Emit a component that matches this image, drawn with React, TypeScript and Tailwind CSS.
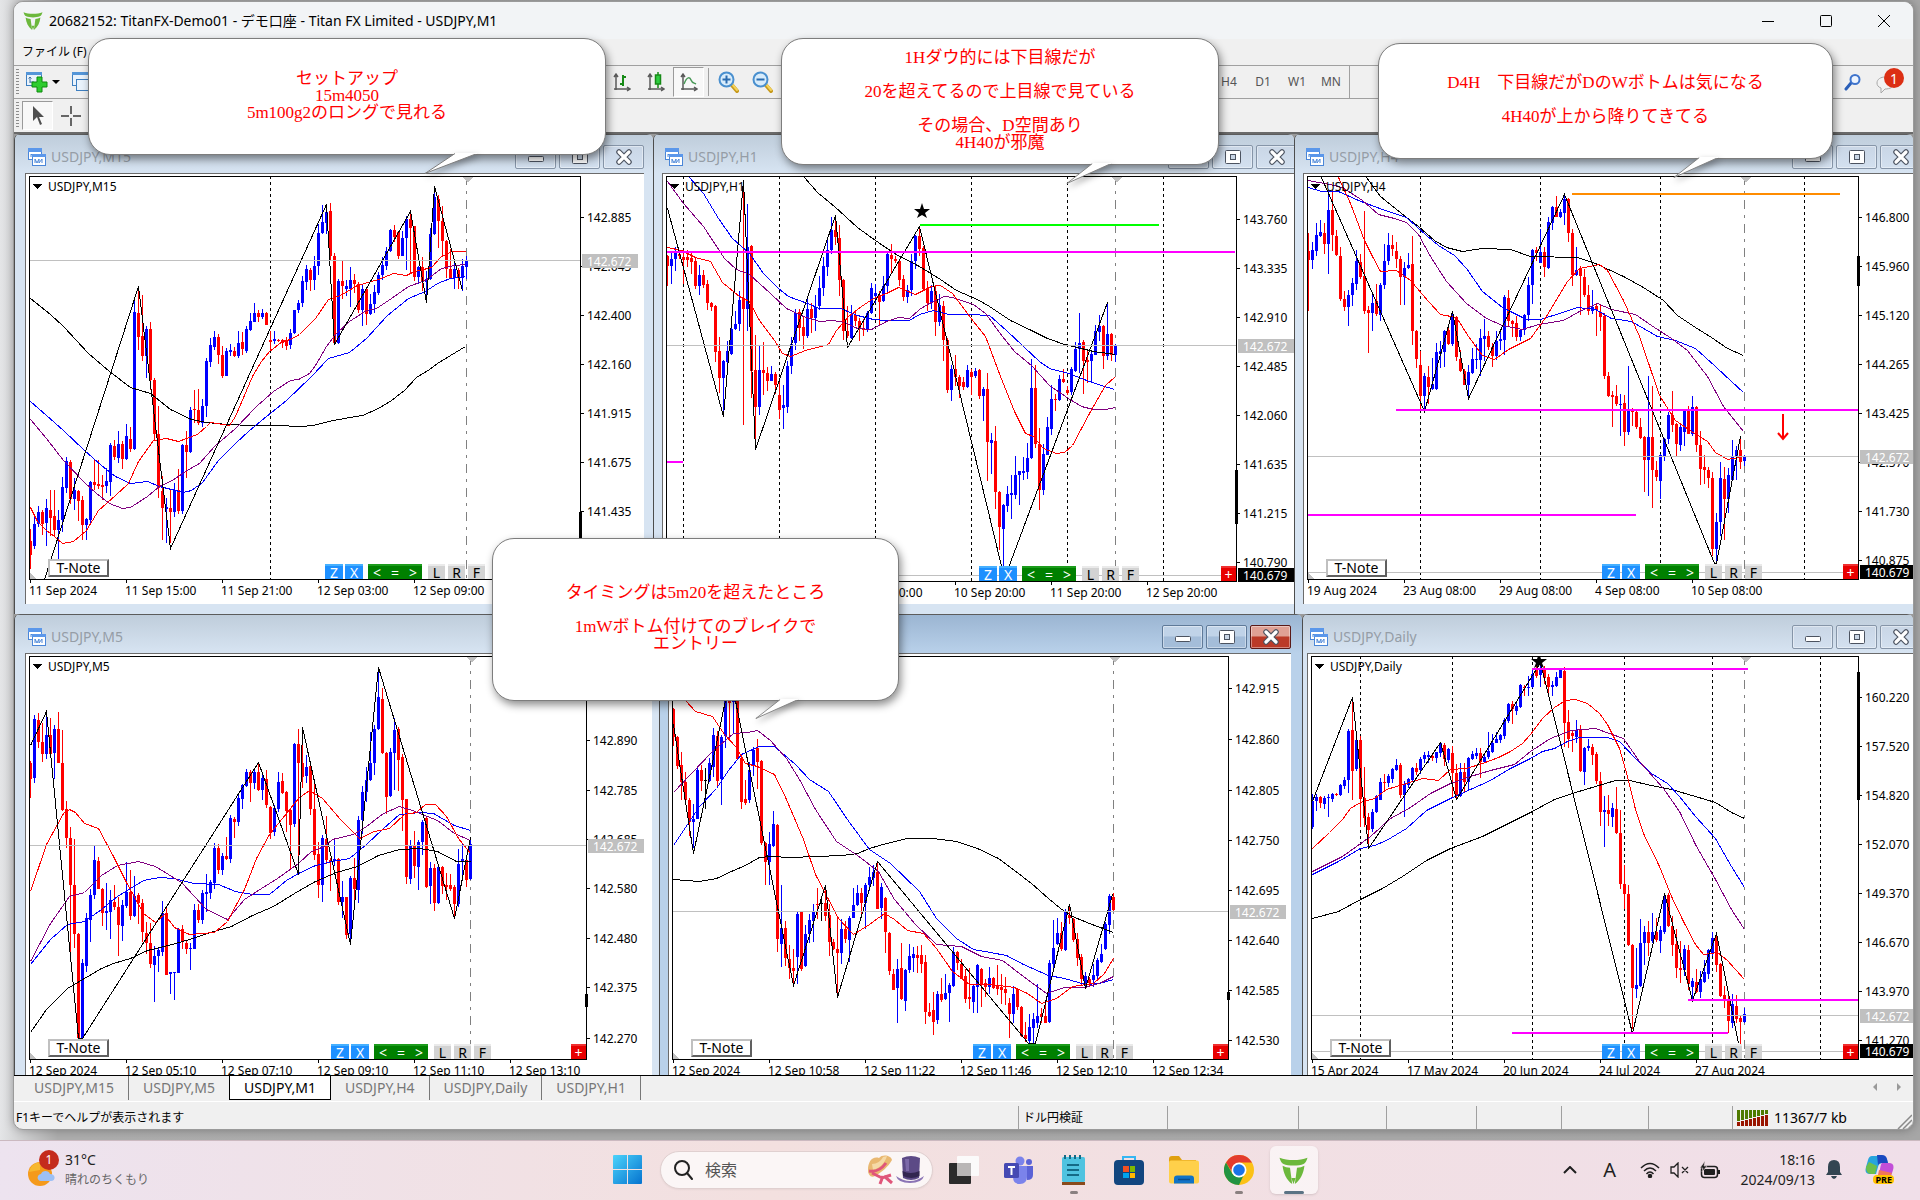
import React from "react";

type Pt = [number, number];

type Chart = {
  id: string;
  title: string;
  unit: number;
  left: number;
  right: number;
  top: number;
  bottom: number;
  start: number;
  candles: string;
  zigzag: string;
  slow: string;
  blue: string;
  purple: string;
  red: string;
  days: number[];
  shift: number;
  bid: number;
  low?: number;
  ticks: [number, string][];
  times: [number, string][];
  range: Pt;
  levels: { y: number; from: number; to: number; color: string }[];
  star?: Pt;
  arrow?: [number, number, number];
  tools: number;
  note?: number;
  plus?: boolean;
};

const M15: Chart = {
  id: "m15",
  title: "USDJPY,M15",
  unit: 2.3758,
  left: 70,
  right: 1380,
  top: 49,
  bottom: 1258,
  start: 72,
  candles: `d1107,1145,1185,1228 u1072,1092,1160,1168 u1040,1058,1092,1102 d1050,1058,1092,1125 u1018,1046,1090,1160
d990,1050,1075,1130 d990,1068,1110,1130 u1052,1080,1110,1197 u952,982,1080,1118 u892,905,985,1000
d900,908,1018,1032 u955,992,1018,1050 d990,993,1025,1085 d1008,1022,1095,1142 u1075,1078,1095,1142
u963,968,1080,1092 d898,968,975,990 d900,972,978,988 d945,975,982,1022 u925,965,980,1000
u850,857,968,1010 d840,860,893,900 u815,852,895,910 d845,852,898,928 u792,830,898,902
d803,838,868,876 u415,458,868,870 d380,460,533,570 d407,528,588,603 u500,507,590,655
d487,507,660,690 d655,660,822,840 d738,822,985,1015 d950,993,1045,1142 u1015,1042,1048,1150
d990,1045,1058,1150 u970,990,1058,1072 d928,990,1055,1062 u852,857,1055,1062 d815,857,878,955
u742,750,878,880 d690,748,752,790 d688,750,790,797 u717,740,790,802 u595,603,740,772
u535,555,607,622 u513,533,562,572 d522,533,585,613 d560,585,648,655 u565,575,648,650
u552,572,577,590 d563,573,590,592 u513,550,588,595 d518,547,568,585 u500,507,573,580
u460,483,512,515 u430,460,487,487 d450,460,473,487 u447,460,473,477 d458,460,497,497
d513,541,546,575 u515,538,545,552 d538,540,543,548 d537,541,550,565 d533,545,558,572
u507,520,557,568 u450,452,520,522 u420,430,452,460 u348,365,430,442 u315,328,367,390
d325,332,360,395 u290,320,360,392 u192,220,320,345 u135,187,220,222 u148,157,190,222
d130,155,290,300 d280,290,550,553 u357,363,550,553 d302,363,380,417 u362,378,387,410
u323,362,387,442 d342,362,372,400 d368,373,452,460 u372,387,452,500 d385,388,463,497
u403,433,463,465 u375,397,433,460 u338,347,400,405 u292,317,347,360 u263,273,318,330
u207,210,273,278 d195,210,232,248 d213,218,288,297 u215,235,288,290 u170,177,235,332
d160,177,205,340 d198,200,353,365 u320,322,353,372 d292,322,365,395 u333,358,368,420
u205,222,358,360 u85,113,222,225 d105,118,185,265 d140,185,245,285 d240,243,327,355
d268,327,355,358 u305,328,355,387 d325,330,355,387 u298,320,355,395 u290,300,323,357`,
  zigzag: "105,1258 329,378 405,1165 775,133 795,552 975,155 1013,427 1033,80 1098,392",
  slow: "72,414 120,462 150,498 210,580 260,635 310,681 357,700 405,748 455,778 490,788 540,794 600,797 660,797 715,799 745,795 780,783 830,772 860,765 900,745 930,722 960,690 990,652 1020,628 1040,610 1070,585 1107,560",
  blue: "72,724 110,765 150,812 200,870 240,915 275,950 310,971 350,965 380,978 435,997 455,990 480,967 520,900 560,850 590,815 620,780 680,722 740,648 780,596 830,578 870,535 920,465 970,415 1010,395 1040,370 1070,355 1107,348",
  purple: "72,778 110,835 150,900 200,968 230,1000 260,1030 290,1045 310,1042 350,1008 380,980 410,962 440,935 475,910 510,858 560,805 610,738 650,695 690,662 710,657 735,640 750,615 775,560 800,520 830,485 870,452 895,445 930,415 970,380 1010,362 1050,325 1080,316 1107,313",
  red: "72,1042 90,1085 110,1110 130,1130 148,1151 175,1143 205,1112 235,1050 275,1005 305,970 330,905 365,840 395,836 425,843 470,822 490,798 500,786 545,795 560,770 600,650 620,605 640,575 670,545 690,538 712,522 750,475 780,418 810,405 850,375 900,358 935,340 965,347 985,335 1005,327 1025,322 1050,288 1075,274 1107,274",
  days: [643],
  shift: 1108,
  bid: 301,
  ticks: [[172, "142.885"], [319, "142.645"], [466, "142.400"], [613, "142.160"], [760, "141.915"], [907, "141.675"], [1054, "141.435"]],
  times: [[72, "11 Sep 2024"], [300, "11 Sep 15:00"], [528, "11 Sep 21:00"], [757, "12 Sep 03:00"], [985, "12 Sep 09:00"]],
  range: [1057, 1200],
  levels: [],
  tools: 773,
  note: 115,
};

const H1: Chart = {
  id: "h1",
  title: "USDJPY,H1",
  unit: 2.4123,
  left: 40,
  right: 1414,
  top: 49,
  bottom: 1265,
  start: 42,
  candles: `d285,290,318,378 u275,297,320,372 u263,280,297,333 d278,282,290,298 d272,292,300,372
d272,293,300,322 d280,295,307,342 d292,305,380,388 u315,345,380,407 d332,345,375,385
d362,372,430,452 d428,430,443,453 d437,440,577,608 d533,575,655,700 u600,605,655,755
u545,573,607,640 u500,508,583,585 u453,492,508,512 u395,420,492,515 d60,415,447,795
u132,262,447,515 d255,260,635,715 d525,632,742,840 u555,632,742,765 d547,630,640,705
d622,640,663,693 u620,642,665,665 d637,643,675,703 d668,705,752,778 u677,735,745,807
u603,618,742,760 u532,552,620,643 u447,460,550,570 d447,458,505,545 d473,503,528,568
u418,447,530,535 d430,447,475,520 u405,443,475,515 u350,385,440,450 u293,320,385,408
u238,270,322,350 u172,210,272,283 d180,212,232,255 d197,235,362,410 d358,362,515,540
d440,513,530,535 u435,463,535,538 d457,467,485,500 d475,483,505,543 d478,505,512,528
u455,460,510,518 u370,385,460,462 u373,400,410,430 d395,405,428,497 u350,380,425,427
u277,282,380,402 d252,287,297,342 d290,297,303,310 d297,305,360,380 d347,357,413,425
u375,390,413,430 u283,303,390,410 u227,230,303,328 d200,230,267,290 d260,265,388,395
d365,388,430,453 u375,395,430,447 d375,395,488,528 u402,435,488,500 d425,438,540,605
d535,540,690,700 u615,627,690,723 d587,627,653,678 d645,653,680,715 d652,667,683,690
u615,630,683,685 d627,637,652,705 u625,635,648,655 d627,632,710,717 u683,687,708,783
d640,687,848,963 u820,842,850,942 d800,843,997,1047 d995,997,1103,1172 u1032,1035,1107,1250
u978,1002,1038,1057 u945,1000,1005,1077 u890,947,1005,1018 u933,935,947,1035 u893,933,940,962
u850,895,937,958 u597,685,895,897 d615,685,853,865 d805,852,990,1050 u852,882,990,1005
u773,803,885,887 u675,717,807,825 d702,717,720,755 u645,657,720,723 d627,657,667,670
d680,690,700,705 u622,627,697,705 u548,567,633,638 u460,550,567,640 d540,548,603,703
d568,602,607,670 u577,582,605,667 u495,515,585,587 u467,498,517,545 d495,498,590,627
u427,522,590,600 d520,522,587,603 u553,557,587,608`,
  zigzag: "42,145 177,770 225,60 255,868 447,165 477,562 650,198 855,1255 1104,428",
  slow: "373,52 405,97 445,140 500,202 545,240 590,280 650,318 700,357 740,390 790,418 820,440 870,480 920,512 960,535 1000,552 1040,565 1070,575 1123,582",
  blue: "95,52 130,100 165,175 200,235 240,280 275,340 310,385 335,408 380,430 410,445 460,445 500,465 540,478 570,482 625,480 650,462 685,450 720,463 770,463 820,465 860,510 900,560 940,605 965,625 1010,640 1060,665 1090,675 1120,688",
  purple: "42,65 80,130 130,200 180,295 210,328 240,342 290,400 330,445 370,468 410,485 440,480 470,487 500,505 535,508 570,485 600,472 625,475 650,448 675,430 710,408 730,413 780,433 810,460 850,530 880,575 920,615 965,675 1010,715 1040,738 1070,748 1100,748 1122,742",
  red: "42,262 75,270 110,293 145,305 175,368 215,408 240,425 265,480 300,540 320,580 340,590 375,570 430,553 450,510 480,470 510,440 540,415 570,400 600,382 640,402 680,380 700,376 730,400 780,485 810,530 845,650 880,755 905,820 925,830 950,865 980,880 1000,877 1020,855 1060,760 1100,675 1122,650",
  days: [81, 312, 544, 776, 1007, 1239],
  shift: 1123,
  bid: 556,
  low: 1246,
  ticks: [[178, "143.760"], [325, "143.335"], [472, "142.910"], [619, "142.485"], [766, "142.060"], [913, "141.635"], [1060, "141.215"], [1207, "140.790"]],
  times: [[505, "9 Sep 20:00"], [737, "10 Sep 20:00"], [968, "11 Sep 20:00"], [1200, "12 Sep 20:00"]],
  range: [930, 1092],
  levels: [
    { y: 275, from: 42, to: 1412, color: "#ff00ff" },
    { y: 903, from: 42, to: 82, color: "#ff00ff" },
    { y: 194, from: 652, to: 1230, color: "#00ff00" },
  ],
  star: [657, 153],
  tools: 796,
  plus: true,
};

const H4: Chart = {
  id: "h4",
  title: "USDJPY,H4",
  unit: 2.4889,
  left: 44,
  right: 1415,
  top: 49,
  bottom: 1258,
  start: 46,
  candles: `d220,275,300,455 u248,272,300,327 u190,225,275,290 u180,217,228,233 d190,220,252,282
u90,150,252,342 d90,150,225,275 d212,230,285,290 d262,290,418,423 d395,417,443,453
u390,405,443,500 u355,370,407,440 u272,305,372,390 d282,307,352,357 d155,350,453,463
d440,450,460,580 u402,430,460,513 d372,423,463,468 u370,377,465,485 u252,303,377,388
u220,255,305,317 d225,255,267,290 d248,275,297,325 d288,297,353,437 u308,325,353,437
u280,315,325,327 d230,313,513,557 d510,513,597,625 d575,617,710,748 u640,650,710,755
d618,652,683,732 u595,672,687,690 u550,578,687,690 u543,573,582,625 u510,513,577,622
d500,510,553,555 u457,472,552,560 d470,473,593,603 d570,597,635,637 d627,633,675,677
u615,637,675,710 u565,597,640,643 u552,597,600,628 u508,535,600,650 u478,530,537,603
d515,530,562,570 d550,562,590,623 u515,543,588,602 u508,537,543,572 u407,413,540,585
d390,415,485,500 d480,485,492,532 d470,490,532,545 u507,512,533,545 u462,467,512,525
u352,375,467,485 u267,272,375,433 d262,270,280,305 u208,278,310,310 d262,277,323,353
u172,188,325,327 u140,142,190,210 d108,142,172,173 u147,158,172,175 u107,118,160,195
d115,118,220,247 d207,220,347,380 u262,330,347,350 d320,328,350,467 d328,352,407,412
d377,407,455,465 u390,443,455,462 d430,440,450,530 d432,458,472,513 d460,470,650,658
d637,650,708,712 d693,705,712,803 d675,708,733,738 u703,733,735,828 d705,730,817,860
u618,752,817,827 d745,750,758,798 d752,758,803,808 d775,803,835,838 d830,833,902,998
u650,833,902,1010 d678,833,930,1045 d905,930,952,963 u883,887,965,1017 u835,838,888,903
u757,765,838,853 d693,765,797,817 d790,792,853,893 u795,803,857,873 u748,750,817,860
d738,752,822,823 u708,743,822,830 d740,742,857,877 d815,855,927,975 d887,923,930,973
d923,930,955,985 d937,955,1167,1190 u1060,1087,1167,1210 u908,955,1087,1130 d923,957,1017,1140
u925,945,1017,1060 u840,890,960,962 u858,870,892,960 d832,870,908,927 u887,890,905,918`,
  zigzag: "78,52 335,755 404,455 444,715 683,103 1056,1210 1062,1210 1121,828",
  slow: "190,52 225,110 290,172 320,200 360,240 390,262 430,273 480,265 550,268 600,288 715,292 760,310 830,350 880,382 930,422 965,465 1010,502 1050,533 1090,565 1128,585",
  blue: "46,82 80,93 120,93 170,120 230,148 290,173 340,225 370,255 410,287 440,325 480,395 530,443 590,477 625,478 670,460 715,441 760,447 800,475 850,485 915,530 960,540 1010,565 1060,620 1100,665 1130,698",
  purple: "46,62 100,73 130,83 180,120 220,163 260,175 290,188 320,222 350,290 390,365 440,430 490,475 530,495 580,508 620,493 680,480 720,455 765,430 800,448 860,462 900,495 950,535 990,570 1040,650 1080,740 1130,813",
  red: "120,52 150,130 185,240 205,290 225,335 265,332 300,360 345,425 375,462 415,473 445,530 480,585 510,598 545,568 600,535 640,470 690,365 720,325 770,312 790,330 830,420 870,530 920,705 960,780 1000,815 1040,845 1060,878 1090,898 1131,890",
  days: [325, 623, 922, 1280],
  shift: 1131,
  bid: 889,
  low: 1238,
  ticks: [[172, "146.800"], [319, "145.960"], [466, "145.120"], [613, "144.265"], [760, "143.425"], [907, "142.570"], [1054, "141.730"], [1201, "140.875"]],
  times: [[46, "19 Aug 2024"], [285, "23 Aug 08:00"], [524, "29 Aug 08:00"], [763, "4 Sep 08:00"], [1003, "10 Sep 08:00"]],
  range: [288, 378],
  levels: [
    { y: 101, from: 703, to: 1371, color: "#ff8c00" },
    { y: 749, from: 265, to: 1415, color: "#ff00ff" },
    { y: 1064, from: 46, to: 864, color: "#ff00ff" },
  ],
  arrow: [1229, 762, 838],
  tools: 779,
  note: 91,
  plus: true,
};

const M5: Chart = {
  id: "m5",
  title: "USDJPY,M5",
  unit: 2.3758,
  left: 70,
  right: 1394,
  top: 170,
  bottom: 1378,
  start: 72,
  candles: `d485,490,540,597 u348,360,537,550 d342,362,428,447 d370,427,465,487 u350,408,465,478
d355,408,465,472 u378,390,462,540 d337,390,490,492 d393,490,632,635 d605,628,717,747
d682,717,858,1070 d720,858,1005,1047 d1000,1005,1317,1320 u1078,1092,1317,1320 u940,957,1100,1117
u870,888,963,1028 u738,783,888,900 d773,785,868,870 d865,868,942,980 u852,935,942,993
u873,903,938,1020 d857,907,922,933 d893,922,978,1070 u903,917,980,1025 u787,878,920,927
d812,877,950,963 u830,890,950,953 d880,888,912,973 d898,910,997,1028 d968,1000,1032,1063
d972,1032,1095,1105 u1040,1070,1098,1208 u1045,1053,1070,1118 u905,942,1057,1070 d920,942,1127,1128
u1117,1119,1125,1185 u1118,1119,1122,1203 u987,988,1120,1122 d978,990,1028,1048 d1022,1030,1048,1065
u1030,1045,1050,1112 u915,933,1048,1050 d915,933,962,970 u873,882,962,975 u825,877,883,938
u843,848,882,900 u732,747,850,870 d735,747,812,823 u762,770,813,827 d712,770,778,782
u648,657,780,790 d653,658,668,717 u582,597,668,680 u553,558,600,628 u510,518,560,562
d513,518,552,608 u510,517,550,570 d490,517,572,575 u523,537,573,602 d513,540,617,625
d620,622,700,720 u618,625,697,710 u518,547,628,637 d520,545,580,583 d575,577,635,697
d630,633,677,808 u430,435,673,682 d390,435,490,815 d435,490,532,567 u467,503,530,552
d487,500,630,647 d555,628,767,783 d728,765,858,895 u707,717,858,908 d650,720,782,795
d777,783,787,875 u715,780,785,800 d777,780,908,917 u845,893,908,957 d893,893,1007,1020
u830,837,1005,1030 d777,837,870,905 u650,663,872,910 u560,577,663,705 u502,543,577,607
u398,490,543,545 u378,388,492,527 u205,293,390,392 d265,300,462,463 d458,462,593,643
u447,457,590,592 u355,392,460,572 d383,388,483,575 d463,473,602,695 d598,600,833,855
u723,738,840,855 d695,737,800,837 u723,727,803,872 u663,668,728,768 d653,657,863,865
u787,807,860,913 d795,807,912,935 u800,803,912,913 d800,803,860,885 d820,857,862,903
d823,857,868,875 d858,862,915,950 u750,795,915,923 u730,780,788,835 d778,783,842,862
u712,735,840,843`,
  zigzag: "72,437 110,335 186,1317 196,1317 614,488 709,823 718,382 832,1033 899,203 1079,955 1117,712",
  slow: "72,1297 110,1230 160,1167 200,1135 240,1105 270,1090 310,1077 350,1052 400,1038 450,1020 500,998 550,980 600,948 650,920 700,882 750,845 800,817 850,800 900,767 950,750 1000,746 1040,755 1085,785 1118,785",
  blue: "72,1095 120,1020 160,973 200,965 240,930 280,890 340,842 380,834 415,835 460,850 520,853 560,875 600,883 640,883 680,843 710,820 750,797 790,785 830,777 870,735 910,685 950,643 1000,637 1030,640 1080,677 1118,692",
  purple: "72,1085 120,970 165,890 200,877 240,828 280,797 330,785 370,800 430,847 490,930 540,958 580,900 620,865 660,835 710,790 740,755 770,740 790,718 840,705 870,680 910,640 950,620 980,632 1040,662 1080,700 1118,722",
  red: "72,875 110,735 150,640 165,628 180,637 200,672 235,687 270,770 300,848 340,940 370,968 390,945 415,983 450,1005 510,998 540,965 580,870 610,775 640,705 680,640 710,595 735,573 765,597 810,660 855,717 890,695 925,687 960,643 990,637 1010,615 1035,613 1060,650 1090,717 1118,760",
  days: [],
  shift: 1118,
  bid: 737,
  ticks: [[421, "142.890"], [571, "142.785"], [718, "142.685"], [867, "142.580"], [1015, "142.480"], [1164, "142.375"], [1317, "142.270"]],
  times: [[72, "12 Sep 2024"], [300, "12 Sep 05:10"], [528, "12 Sep 07:10"], [757, "12 Sep 09:10"], [985, "12 Sep 11:10"], [1213, "12 Sep 13:10"]],
  range: [1183, 1223],
  levels: [],
  tools: 787,
  note: 115,
  plus: true,
};

const M1: Chart = {
  id: "m1",
  title: "USDJPY,M1",
  unit: 2.4123,
  left: 54,
  right: 1396,
  top: 170,
  bottom: 1378,
  start: 56,
  candles: `d325,328,412,440 d410,412,500,510 d457,497,547,602 d517,547,602,618 d595,602,667,710
u615,660,668,745 u503,513,658,660 d497,513,545,575 k505,543,546,630 u475,490,545,547
u385,408,502,533 d395,410,545,560 u407,412,540,617 u290,300,410,447 d280,290,310,420
u280,290,308,400 d290,300,478,480 d465,477,607,628 d543,600,612,617 u487,513,603,612
u443,453,500,530 d420,445,487,570 d483,485,730,738 d728,732,788,857 u697,735,788,857
u635,673,740,743 d673,677,1020,1057 u858,985,1035,1103 d965,985,1077,1100 d1037,1080,1107,1140
d1050,1105,1115,1155 u937,945,1073,1155 d935,937,1110,1115 u977,1005,1100,1103 u943,962,1005,1030
u913,937,965,1027 d867,913,917,960 k900,912,915,965 d857,910,950,965 d915,947,1027,1070
d1020,1027,1050,1053 d955,1050,1060,1190 u960,990,1060,1093 d965,988,1020,1030 u950,957,1022,1088
u867,917,955,957 u857,880,917,920 d867,880,910,957 u852,857,910,990 u803,833,857,875
u797,817,835,860 d785,817,928,930 u850,863,927,960 d893,895,998,1060 d998,1000,1115,1127
d1110,1123,1172,1173 u1080,1110,1167,1272 d1030,1107,1200,1202 u1110,1113,1205,1235 u1035,1070,1113,1120
u1043,1065,1075,1117 d1040,1067,1075,1120 d1037,1067,1093,1120 d1067,1087,1237,1273 d1212,1237,1250,1252
d1178,1233,1267,1307 u1175,1185,1263,1273 d1135,1183,1202,1208 u1123,1180,1200,1202 u1152,1158,1180,1268
u1043,1057,1160,1162 d1055,1057,1090,1113 d1078,1093,1138,1140 d1110,1130,1200,1212 d1107,1193,1200,1230
u1155,1160,1208,1240 u1095,1097,1163,1242 d1107,1110,1155,1222 d1140,1150,1163,1193 u1103,1135,1163,1183
d1133,1137,1167,1170 d1098,1157,1168,1187 d1125,1163,1173,1215 d1133,1170,1180,1217 d1195,1210,1245,1317
u1160,1183,1245,1270 d1167,1170,1223,1233 d1220,1223,1310,1313 d1268,1307,1320,1328 u1243,1282,1325,1330
u1240,1260,1285,1330 u1155,1250,1272,1285 d1225,1243,1253,1270 d1210,1250,1270,1272 u1083,1090,1268,1272
u963,1045,1093,1105 u957,1000,1035,1037 d968,1000,1050,1055 u930,935,1053,1055 d915,947,957,975
d955,960,1022,1027 d1000,1020,1077,1100 d1065,1073,1140,1160 u1117,1130,1160,1167 d1133,1138,1150,1160
u1093,1127,1143,1163 u1075,1083,1130,1142 u1035,1065,1088,1092 u968,973,1050,1052 u885,890,977,1003
d882,893,933,935`,
  zigzag: "56,375 105,760 195,230 346,1158 423,857 452,1192 549,785 913,1330 930,1330 1012,913 1050,1167 1116,885",
  slow: "56,838 120,844 160,837 200,812 230,797 265,773 290,769 340,773 400,770 465,768 500,760 530,747 570,730 620,716 680,715 740,725 790,745 840,777 880,812 920,850 960,895 990,925 1020,950 1060,970 1118,998",
  blue: "56,737 90,675 120,620 160,565 190,512 220,465 265,440 300,440 350,495 385,540 430,575 480,668 530,748 580,790 650,875 690,955 740,1015 780,1048 820,1057 860,1067 900,1095 960,1127 1000,1135 1050,1155 1085,1152 1118,1140",
  purple: "56,578 100,520 150,455 200,400 235,398 260,391 290,422 330,475 360,540 400,630 450,725 500,768 550,815 590,900 640,975 690,1033 750,1040 800,1070 850,1083 900,1130 955,1180 1000,1163 1050,1162 1090,1147 1118,1130",
  red: "85,303 110,335 150,350 180,405 205,440 230,490 260,500 300,525 330,600 370,720 400,825 430,900 455,955 490,1003 530,975 565,942 590,960 620,993 660,1000 690,1045 730,1115 770,1155 820,1155 880,1163 910,1180 945,1210 980,1195 1020,1160 1070,1150 1095,1120 1118,1077",
  days: [],
  shift: 1118,
  bid: 934,
  ticks: [[267, "142.915"], [420, "142.860"], [571, "142.805"], [721, "142.750"], [871, "142.695"], [1021, "142.640"], [1171, "142.585"], [1321, "142.530"]],
  times: [[56, "12 Sep 2024"], [288, "12 Sep 10:58"], [520, "12 Sep 11:22"], [751, "12 Sep 11:46"], [983, "12 Sep 12:10"], [1214, "12 Sep 12:34"]],
  range: [1177, 1203],
  levels: [],
  tools: 779,
  note: 100,
  plus: true,
};

const DAILY: Chart = {
  id: "daily",
  title: "USDJPY,Daily",
  unit: 2.4889,
  left: 54,
  right: 1415,
  top: 170,
  bottom: 1378,
  start: 56,
  candles: `u585,605,683,690 u583,593,605,635 d590,593,612,625 u590,595,613,630 u583,593,597,653
u580,583,600,607 d582,583,588,590 u555,558,588,590 u533,542,560,570 u388,395,542,580
d300,393,515,603 u405,422,510,515 d410,423,600,683 d503,597,655,683 d642,652,692,745
u628,638,690,697 u587,590,638,640 u537,548,603,603 d523,548,552,573 u525,530,552,562
u505,510,540,550 u478,497,513,515 d490,497,587,595 u545,553,587,653 u537,540,557,567
u503,507,543,545 d490,507,517,527 u473,478,512,523 u457,467,480,492 u455,468,472,490
d468,470,475,485 u457,458,475,492 u427,430,462,472 d430,437,480,500 u445,450,483,492
d440,460,520,597 d495,520,590,600 u490,517,590,592 d492,517,548,580 u473,477,548,572
u455,465,480,483 u445,460,470,480 d445,460,487,537 u465,472,487,490 u397,455,473,480
u405,430,458,460 u398,420,430,432 u405,407,423,430 u357,362,410,420 u310,313,365,370
d305,315,330,375 u310,320,335,347 u255,258,323,325 d257,262,265,290 u230,263,267,290
u212,225,262,265 d190,205,230,235 u195,212,228,263 d200,213,235,253 d225,233,262,287
u245,257,262,290 u218,232,260,262 u207,210,235,235 d203,215,372,443 d333,367,420,447
d393,400,410,458 u362,393,412,430 d378,393,515,517 u443,445,517,558 u418,440,447,455
d433,443,468,497 d458,465,545,555 d518,545,638,680 u590,632,638,743 d588,632,645,680
u610,627,652,683 d562,628,702,705 d633,700,853,870 d798,853,885,930 d858,883,1037,1040
d1035,1038,1167,1290 u1045,1157,1170,1197 u960,1030,1160,1162 u980,997,1032,1097 d965,997,1030,1070
u942,998,1025,1030 d957,997,1022,1027 u980,993,1025,1062 u880,890,998,1005 d882,888,980,982
d950,980,1038,1070 d990,1035,1105,1137 d1025,1105,1112,1152 u1038,1048,1112,1130 d1037,1053,1155,1173
u1137,1145,1163,1200 d1110,1147,1177,1180 u1115,1140,1178,1195 u1083,1117,1147,1150 u1050,1052,1125,1140
u997,1015,1063,1070 d1003,1015,1097,1117 d1090,1095,1190,1192 d1160,1188,1200,1225 d1183,1200,1265,1300
u1185,1213,1272,1287 d1188,1220,1260,1272 d1247,1257,1267,1333 u1225,1245,1268,1272`,
  zigzag: "56,605 155,293 195,745 375,427 415,600 623,187 852,1300 933,882 1002,1203 1062,1000 1118,1330",
  slow: "56,955 120,935 180,897 230,867 280,830 340,783 400,747 480,710 540,675 600,637 660,600 710,577 760,560 810,541 845,541 900,557 950,568 1010,590 1060,608 1100,637 1131,655",
  blue: "56,825 120,785 175,745 210,738 240,722 290,685 340,632 400,595 450,570 500,543 550,507 600,477 630,455 660,447 690,425 720,413 790,412 820,425 860,475 900,520 940,550 970,590 1010,650 1060,715 1100,800 1131,862",
  purple: "56,815 130,770 200,710 250,655 300,622 350,580 400,550 450,530 500,512 560,495 600,455 650,415 700,392 760,386 830,417 870,485 930,567 970,635 1010,735 1060,840 1100,930 1131,988",
  red: "56,747 100,697 130,660 150,625 175,607 210,595 240,568 290,552 330,537 370,541 400,510 440,505 480,492 520,472 550,455 580,430 600,403 630,357 660,322 685,302 710,298 740,310 770,340 790,375 820,445 840,530 860,630 880,700 920,800 950,890 980,965 1010,1035 1030,1065 1065,1058 1090,1083 1110,1110 1131,1138",
  days: [175, 404, 603, 832, 1051, 1320],
  shift: 1131,
  bid: 1246,
  low: 1355,
  ticks: [[292, "160.220"], [439, "157.520"], [586, "154.820"], [733, "152.070"], [880, "149.370"], [1027, "146.670"], [1174, "143.970"], [1321, "141.270"]],
  times: [[56, "15 Apr 2024"], [295, "17 May 2024"], [534, "20 Jun 2024"], [773, "24 Jul 2024"], [1012, "27 Aug 2024"]],
  range: [217, 603],
  levels: [
    { y: 207, from: 605, to: 1142, color: "#ff00ff" },
    { y: 1200, from: 993, to: 1415, color: "#ff00ff" },
    { y: 1299, from: 555, to: 1093, color: "#ff00ff" },
  ],
  star: [622, 184],
  tools: 779,
  note: 101,
  plus: true,
};

const CANDLE_COLORS: Record<string, string> = { u: "#0000ff", d: "#ff0000", k: "#000000" };
const FRAME_X = 3;
const FRAME_Y = 2;
const CANDLE_STEP = 4;

function ToolKey({ label, className }: { label: string; className: string }) {
  return (
    <button type="button" className={`flex h-[15px] items-center justify-center border-t-2 text-[14px] leading-none ${className}`}>
      {label}
    </button>
  );
}

function ChartView({ chart }: { chart: Chart }) {
  const px = (v: number) => Math.round((v - chart.left) / chart.unit) + FRAME_X;
  const py = (v: number) => Math.round((v - chart.top) / 3) + FRAME_Y;
  const line = (s: string) =>
    s.split(" ").map((p) => {
      const [a, b] = p.split(",").map(Number);
      return `${px(a) + 0.5},${py(b) + 0.5}`;
    }).join(" ");
  const candles = chart.candles.split(/\s+/).map((c) => ({
    color: CANDLE_COLORS[c[0]],
    v: c.slice(1).split(",").map(Number),
  }));
  const right = px(chart.right);
  const bottom = py(chart.bottom);
  const bidY = py(chart.bid);
  const tag = (y: number, fill: string, text: string) => (
    <g>
      <rect x={right + 2} y={y - 7} width={56} height={14} fill={fill} />
      <text x={right + 7} y={y + 5} fill="#fff">{text}</text>
    </g>
  );
  return (
    <div className="relative h-[430px]">
      <svg className="block h-full w-full font-['Noto_Sans',sans-serif] text-[12px]" role="img" aria-label={`${chart.title} chart`} shapeRendering="crispEdges">
        <clipPath id={`plot-${chart.id}`}>
          <rect x={FRAME_X} y={FRAME_Y} width={right - FRAME_X} height={bottom - FRAME_Y} />
        </clipPath>
        <g clipPath={`url(#plot-${chart.id})`} fill="none">
          {chart.days.map((d) => (
            <line key={d} x1={px(d) + 0.5} x2={px(d) + 0.5} y1={FRAME_Y} y2={bottom} stroke="#000" strokeDasharray="3 3" />
          ))}
          <line x1={px(chart.shift) + 0.5} x2={px(chart.shift) + 0.5} y1={FRAME_Y} y2={bottom} stroke="#808080" strokeDasharray="9 6 3 6" />
          {candles.map(({ color, v }, i) => {
            const x = px(chart.start) + i * CANDLE_STEP;
            return (
              <g key={i} fill={color}>
                <rect x={x} y={py(v[0])} width={1} height={Math.max(1, py(v[3]) - py(v[0]))} />
                <rect x={x - 1} y={py(v[1])} width={3} height={Math.max(1, py(v[2]) - py(v[1]))} />
              </g>
            );
          })}
          <polyline points={line(chart.slow)} stroke="#000" />
          <polyline points={line(chart.blue)} stroke="#0000ff" />
          <polyline points={line(chart.purple)} stroke="#800080" />
          <polyline points={line(chart.red)} stroke="#ff0000" />
          <polyline points={line(chart.zigzag)} stroke="#000" />
          {chart.low && <line x1={FRAME_X} x2={right} y1={py(chart.low) + 0.5} y2={py(chart.low) + 0.5} stroke="#c0c0c0" />}
          <line x1={FRAME_X} x2={right} y1={bidY + 0.5} y2={bidY + 0.5} stroke="#c0c0c0" />
          {chart.levels.map((l) => (
            <rect key={`${l.y}-${l.from}`} x={px(l.from)} y={py(l.y)} width={px(l.to) - px(l.from)} height={2} fill={l.color} />
          ))}
          {chart.star && (
            <polygon
              shapeRendering="auto"
              fill="#000"
              transform={`translate(${px(chart.star[0])} ${py(chart.star[1])})`}
              points="0,-8 2,-2 8,-2 3,2 5,7 0,4 -5,7 -3,2 -8,-2 -2,-2"
            />
          )}
          {chart.arrow && (
            <path
              shapeRendering="auto"
              stroke="#ff0000"
              strokeWidth={2}
              d={`M${px(chart.arrow[0])} ${py(chart.arrow[1])}V${py(chart.arrow[2])}m-5 -6l5 6l5 -6`}
            />
          )}
          <path d={`M${px(chart.shift) - 3} ${FRAME_Y + 1}h10l-5 6z`} fill="#c0c0c0" />
          <path d={`M${FRAME_X + 1} ${bottom}v-6l6 6z`} fill="#c0c0c0" />
        </g>
        <rect x={FRAME_X + 0.5} y={FRAME_Y + 0.5} width={right - FRAME_X} height={bottom - FRAME_Y} fill="none" stroke="#000" />
        <rect x={right - 1} y={py(chart.range[0])} width={3} height={py(chart.range[1]) - py(chart.range[0])} fill="#000" />
        {chart.ticks.map(([y, label]) => (
          <g key={label}>
            <rect x={right + 1} y={py(y)} width={3} height={1} fill="#000" />
            <text x={right + 7} y={py(y) + 5}>{label}</text>
          </g>
        ))}
        {chart.times.map(([x, label]) => (
          <g key={label}>
            <rect x={px(x)} y={bottom} width={1} height={4} fill="#000" />
            <text x={px(x) - 1} y={bottom + 16}>{label}</text>
          </g>
        ))}
        {tag(bidY + 1, "#c0c0c0", "142.672")}
        {chart.low && tag(py(chart.low), "#000", "140.679")}
        <path d={`M${FRAME_X + 4} ${FRAME_Y + 8}h9l-4.500 5z`} />
        <text x={FRAME_X + 19} y={FRAME_Y + 15}>{chart.title}</text>
      </svg>
      {chart.note && (
        <button
          type="button"
          className="absolute h-[18px] w-[61px] border-2 border-t-[#c0c0c0] border-r-[#606060] border-b-[#606060] border-l-[#c0c0c0] bg-white text-[14px] leading-none"
          style={{ left: px(chart.note), top: bottom - 20 }}
        >
          T-Note
        </button>
      )}
      <div className="absolute flex" style={{ left: px(chart.tools), top: bottom - 15 }}>
        <ToolKey label="Z" className="w-[18px] border-[#46b0ff] bg-[#1e90ff] text-white" />
        <ToolKey label="X" className="ml-0.5 w-[18px] border-[#46b0ff] bg-[#1e90ff] text-white" />
        <ToolKey label="<" className="ml-[5px] w-[18px] border-[#1c9c1c] bg-[#008000] text-white" />
        <ToolKey label="=" className="w-[18px] border-[#1c9c1c] bg-[#008000] text-white" />
        <ToolKey label=">" className="w-[18px] border-[#1c9c1c] bg-[#008000] text-white" />
        <ToolKey label="L" className="ml-[6px] w-[17px] border-[#eaeaea] bg-[#d3d3d3] text-black" />
        <ToolKey label="R" className="ml-[3px] w-[17px] border-[#eaeaea] bg-[#d3d3d3] text-black" />
        <ToolKey label="F" className="ml-[3px] w-[17px] border-[#eaeaea] bg-[#d3d3d3] text-black" />
      </div>
      {chart.plus && (
        <div className="absolute" style={{ left: right - 15, top: bottom - 15 }}>
          <ToolKey label="+" className="w-[15px] border-[#f03030] bg-[#e80000] text-white" />
        </div>
      )}
    </div>
  );
}

function ChartIcon() {
  return (
    <svg className="h-[18px] w-[18px] shrink-0" viewBox="0 0 18 18" fill="none">
      <rect x="0.5" y="0.5" width="13" height="11" fill="#fff" stroke="#4a86d8" />
      <rect x="0" y="0" width="14" height="4" fill="#5b97ea" />
      <path d="M3 9V6l2 2 2-2 2 2 2-2" stroke="#4a86d8" />
      <rect x="4.5" y="6.5" width="13" height="11" fill="#fff" stroke="#4a86d8" />
      <rect x="4" y="6" width="14" height="3" fill="#5b97ea" />
      <path d="M7 15v-4l2 4 2-4v4l3-4v4" stroke="#4a86d8" />
    </svg>
  );
}

function CaptionButton({ kind, active }: { kind: "min" | "max" | "close"; active?: boolean }) {
  const closeActive = kind === "close" && active;
  const tone = closeActive
    ? "border-[#5a1a18] bg-linear-to-b from-[#e0a195] from-45% to-[#bb3a28] to-50%"
    : active
      ? "border-[#5f7a99] bg-linear-to-b from-[#c0d3e8] from-45% to-[#a4bdd9] to-50%"
      : "border-[#8695a8] bg-linear-to-b from-[#c9d6e6] to-[#d3e0ef]";
  return (
    <button type="button" aria-label={kind} className={`flex h-6 w-[41px] shrink-0 items-center justify-center rounded-xs border shadow-[inset_0_0_0_1px_rgba(255,255,255,0.4)] ${tone}`}>
      <svg className="h-4 w-[18px]" viewBox="0 0 18 16" fill="#fff" stroke="#4c5360">
        {kind === "min" && <rect x="1.5" y="7.5" width="15" height="5" rx="1" />}
        {kind === "max" && (
          <>
            <rect x="1.5" y="1.5" width="15" height="13" rx="1" />
            <rect x="6.5" y="5.5" width="5" height="5" fill="#c9d6e6" />
          </>
        )}
        {kind === "close" && (
          <>
            <path d="M4 3L14 13M14 3L4 13" strokeWidth="5.5" strokeLinecap="round" />
            <path d="M4 3L14 13M14 3L4 13" stroke="#fff" strokeWidth="3.2" strokeLinecap="round" />
          </>
        )}
      </svg>
    </button>
  );
}

function MdiWindow({ chart, active, pad, end }: { chart: Chart; active?: boolean; pad: string; end: string }) {
  return (
    <section className={`min-w-0 overflow-hidden rounded-t-md border-l border-[#4d4d4d] ${active ? "bg-[#b9d1ea]" : "bg-[#d7e4f2]"}`}>
      <header className={`flex h-[39px] items-center border-t border-[#5c5c5c] ${end} ${pad} ${active ? "bg-linear-to-b from-[#9bb5d2] to-[#b9d1ea]" : "bg-linear-to-b from-[#bfcddb] to-[#d7e4f2]"}`}>
        <div className="flex min-w-0 flex-1 items-center gap-[5px] pt-[6px] pl-[3px]">
          <ChartIcon />
          <h2 className={`text-[14px] leading-5 ${active ? "text-black" : "text-[#959da6]"}`}>{chart.title}</h2>
        </div>
        <div className="flex gap-[3px] pt-[6px]">
          <CaptionButton kind="min" active={active} />
          <CaptionButton kind="max" active={active} />
          <CaptionButton kind="close" active={active} />
        </div>
      </header>
      <div className={`pb-[10px] ${pad} ${end}`}>
        <div className="overflow-hidden border-t border-l border-[#6b6b6b] bg-white">
          <ChartView chart={chart} />
        </div>
      </div>
    </section>
  );
}

function Callout({ text, className, tail, drop }: { text: string; className: string; tail: string; drop: string }) {
  return (
    <div className={`absolute z-10 flex items-center justify-center rounded-[22px] border border-[#7d7d7d] bg-white pb-[3px] shadow-[2px_4px_8px_rgba(0,0,0,0.45)] ${className}`}>
      <p className="whitespace-pre-line text-center font-['Liberation_Serif','Noto_Sans_CJK_JP',serif] text-[17px] leading-[17px] font-normal text-[#ff0000]">{text}</p>
      <svg className={`absolute top-full -mt-px drop-shadow-[2px_3px_3px_rgba(0,0,0,0.35)] ${tail} ${drop}`} viewBox="0 0 54 21" preserveAspectRatio="none">
        <path d="M31 0.5L1 20.5L53 0.5" fill="#fff" stroke="#7d7d7d" />
        <path d="M31 0H53" stroke="#fff" strokeWidth="2" />
      </svg>
    </div>
  );
}

function TitanLogo({ className }: { className: string }) {
  return (
    <svg className={className} viewBox="0 0 32 32">
      <path d="M0 2C9 5.500 23 5.500 32 2C31 5 30 8 27.500 9C22 11.500 10 11.500 4.500 9C2 8 1 5 0 2Z" fill="#6cb83c" />
      <path d="M3.500 11C6 12.500 9 13 12 13.300L14.500 32C8 27 4.500 20 3.500 11Z" fill="#6cb83c" />
      <path d="M28.500 11C26 12.500 23 13 20 13.300L17.500 32C24 27 27.500 20 28.500 11Z" fill="#6cb83c" />
      <path d="M13.500 25h5L16 32z" fill="#6cb83c" />
    </svg>
  );
}

function AxisIcon({ kind }: { kind: "bar" | "candle" | "line" }) {
  return (
    <svg className="h-5 w-[18px]" viewBox="0 0 18 20" fill="none" stroke="#5a5a5a" strokeWidth="1.5">
      <path d="M3 18V3M1 5l2-3 2 3M1 17h15M14 15l3 2-3 2" />
      {kind === "bar" && <path d="M10 3v11M10 5h3M7 12h3" stroke="#178a17" strokeWidth="2" />}
      {kind === "candle" && (
        <>
          <path d="M11 0v16" stroke="#178a17" />
          <rect x="8.5" y="3" width="5" height="9" fill="#2ecc40" stroke="#178a17" />
        </>
      )}
      {kind === "line" && <path d="M4 12C7 4 10 5 11 8s3 3 5 4" stroke="#4d9a5b" />}
    </svg>
  );
}

function ZoomIcon({ plus }: { plus?: boolean }) {
  return (
    <svg className="h-[22px] w-[22px]" viewBox="0 0 22 22" fill="none">
      <path d="M13 13l6 7" stroke="#c79a1c" strokeWidth="4" strokeLinecap="round" />
      <path d="M14 13l5 6" stroke="#f5d35a" strokeWidth="2" strokeLinecap="round" />
      <circle cx="8.5" cy="8.5" r="7" fill="#d8ecfb" stroke="#4a90cf" strokeWidth="2" />
      <path d={plus ? "M4.500 8.500h8M8.500 4.500v8" : "M4.500 8.500h8"} stroke="#2b6cb0" strokeWidth="2" />
    </svg>
  );
}

function Grip() {
  return <span className="h-[27px] w-[3px] shrink-0 bg-[repeating-linear-gradient(to_bottom,#8c8c8c_0,#8c8c8c_1px,#f0f0f0_1px,#f0f0f0_3px)]" />;
}

const TIMEFRAMES = ["H4", "D1", "W1", "MN"];
const TABS = ["USDJPY,M15", "USDJPY,M5", "USDJPY,M1", "USDJPY,H4", "USDJPY,Daily", "USDJPY,H1"];

function Toolbars() {
  return (
    <>
      <div className="flex h-[34px] items-center border-t border-b border-[#a0a0a0] pl-[2px]">
        <Grip />
        <button type="button" aria-label="New chart" className="ml-[7px]">
          <svg className="h-[22px] w-[22px]" viewBox="0 0 22 22">
            <rect x="0.5" y="1.5" width="15" height="13" fill="#eaf3fc" stroke="#3f7fc0" />
            <rect x="0" y="1" width="16" height="3" fill="#5596d8" />
            <path d="M4 6v6M2.500 7.500L4 6l1.500 1.500M4 11h4" stroke="#3f6f9f" fill="none" />
            <path d="M11 6h5v5h5v5h-5v5h-5v-5H6v-5h5z" fill="#2ecc2e" stroke="#0d8a0d" />
          </svg>
        </button>
        <svg className="ml-[4px] h-1 w-2" viewBox="0 0 8 4"><path d="M0 0h8L4 4z" /></svg>
        <button type="button" aria-label="Profiles" className="ml-3">
          <svg className="h-[22px] w-[22px]" viewBox="0 0 22 22">
            <rect x="0.5" y="1.5" width="16" height="13" fill="#eaf3fc" stroke="#3f7fc0" />
            <rect x="0" y="1" width="17" height="3" fill="#5596d8" />
            <rect x="4.5" y="8.5" width="16" height="11" fill="#eaf3fc" stroke="#3f7fc0" />
          </svg>
        </button>
        <span className="ml-[519px] flex items-center gap-4">
          <button type="button" aria-label="Bar chart"><AxisIcon kind="bar" /></button>
          <button type="button" aria-label="Candlesticks"><AxisIcon kind="candle" /></button>
        </span>
        <button type="button" aria-label="Line chart" className="ml-2 flex h-[30px] w-[31px] items-center justify-center border border-t-[#9a9a9a] border-r-white border-b-white border-l-[#9a9a9a] bg-[#f8f8f8]">
          <AxisIcon kind="line" />
        </button>
        <span className="ml-1 h-7 w-px bg-[#a0a0a0]" />
        <span className="ml-[9px] flex gap-3">
          <button type="button" aria-label="Zoom in"><ZoomIcon plus /></button>
          <button type="button" aria-label="Zoom out"><ZoomIcon /></button>
        </span>
        <div className="ml-[438px] flex h-full w-[138px] items-center border-r border-[#a0a0a0]">
          {TIMEFRAMES.map((t) => (
            <button key={t} type="button" className="w-[34px] text-center text-[12px] text-[#555]">{t}</button>
          ))}
        </div>
        <div className="ml-auto flex items-center gap-[14px] pr-[7px]">
          <button type="button" aria-label="Search">
            <svg className="h-[18px] w-[18px]" viewBox="0 0 18 18" fill="none">
              <path d="M7 10l-5 6" stroke="#2b5fb8" strokeWidth="3" strokeLinecap="round" />
              <circle cx="11" cy="6.5" r="4.5" fill="#eef5ff" stroke="#3f74cc" strokeWidth="2" />
            </svg>
          </button>
          <button type="button" aria-label="Messages" className="relative h-7 w-[30px]">
            <svg className="absolute top-2 left-0 h-[18px] w-5" viewBox="0 0 20 18">
              <path d="M9 1c5 0 9 2 9 6s-4 6-9 6l-4 4v-5C2 11 1 9 1 7c0-4 4-6 8-6z" fill="#f3f3f3" stroke="#a8a8a8" />
            </svg>
            <span className="absolute top-0 right-0.5 flex h-5 w-5 items-center justify-center rounded-full bg-[#dc2f14] text-[14px] text-white">1</span>
          </button>
        </div>
      </div>
      <div className="flex h-[33px] items-center pl-[2px]">
        <Grip />
        <button type="button" aria-label="Cursor" className="ml-[3px] flex h-[29px] w-[31px] items-center justify-center border border-t-[#9a9a9a] border-r-white border-b-white border-l-[#9a9a9a] bg-[#f8f8f8]">
          <svg className="h-5 w-3" viewBox="0 0 12 20"><path d="M1 0v15l4-4 3 8 2-1-3-7h5z" fill="#4f4f4f" /></svg>
        </button>
        <button type="button" aria-label="Crosshair" className="ml-2">
          <svg className="h-5 w-5" viewBox="0 0 20 20" stroke="#666" strokeWidth="2"><path d="M10 0v8M10 12v8M0 10h8M12 10h8" /></svg>
        </button>
      </div>
    </>
  );
}

function StatusBar() {
  return (
    <footer className="flex h-7 items-stretch border-t border-white pt-1 text-[12px]">
      <span className="flex flex-1 items-center pl-0.5">F1キーでヘルプが表示されます</span>
      <span className="flex w-[149px] items-center border-l border-[#a0a0a0] pl-1">ドル円検証</span>
      <span className="w-[131px] border-l border-[#a0a0a0]" />
      <span className="w-[88px] border-l border-[#a0a0a0]" />
      <span className="w-[90px] border-l border-[#a0a0a0]" />
      <span className="w-[85px] border-l border-[#a0a0a0]" />
      <span className="w-[87px] border-l border-[#a0a0a0]" />
      <span className="w-[84px] border-l border-[#a0a0a0]" />
      <span className="flex w-[181px] items-center gap-[5px] border-l border-[#a0a0a0] pl-1">
        <svg className="h-4 w-8" viewBox="0 0 32 16">
          {[0, 1, 2, 3, 4, 5, 6, 7].map((i) => (
            <g key={i}>
              <rect x={i * 4} y="0" width="3" height={11 - i} fill="#4f7a00" />
              <rect x={i * 4} y={12 - i} width="3" height={4 + i} fill="#9a1500" />
            </g>
          ))}
        </svg>
        <span className="text-[14px]">11367/7 kb</span>
        <svg className="mr-px ml-auto h-4 w-4 self-end" viewBox="0 0 16 16" stroke="#8a8a8a" strokeWidth="1.5"><path d="M2 16L16 2M7 16l9-9M12 16l4-4" /></svg>
      </span>
    </footer>
  );
}

function TaskItem({ label, running, active, children }: { label: string; running?: boolean; active?: boolean; children: React.ReactNode }) {
  return (
    <button type="button" aria-label={label} className="flex w-[55px] items-center justify-center">
      <span className={`relative flex h-12 w-12 items-center justify-center rounded-md ${active ? "bg-white/60 shadow-sm" : ""}`}>
        {children}
        {running && <span className={`absolute bottom-0 h-[3px] rounded-full ${active ? "w-5 bg-[#5b7384]" : "w-2 bg-[#8a8080]"}`} />}
      </span>
    </button>
  );
}

function Taskbar() {
  return (
    <div className="flex h-[60px] items-center border-t border-[#cbb9c0] bg-linear-to-r from-[#ede3ef] via-[#f3e0df] via-40% to-[#f0dfe9] pb-0.5">
      <button type="button" className="flex w-[613px] items-center gap-[6px] pl-[27px] text-left">
        <span className="relative h-10 w-8">
          <svg className="h-10 w-8" viewBox="0 0 32 40">
            <ellipse cx="13" cy="24" rx="12" ry="12" fill="#f59a1b" />
            <path d="M2 22a12 12 0 0 1 11-10v8z" fill="#f7b82e" />
            <path d="M14 31c-4 0-5-6 0-7 1-4 8-4 9 0 6 0 6 7 1 7z" fill="#9dc0f5" />
          </svg>
          <span className="absolute top-0 right-0 flex h-5 w-5 items-center justify-center rounded-full bg-[#c42b1c] text-[12px] text-white">1</span>
        </span>
        <span className="flex flex-col">
          <span className="text-[14px] leading-5 text-[#222]">31°C</span>
          <span className="text-[12px] leading-5 text-[#666]">晴れのちくもり</span>
        </span>
      </button>
      <button type="button" aria-label="Start" className="mr-[18px] shrink-0">
        <svg className="h-[29px] w-[29px]" viewBox="0 0 29 29">
          <defs>
            <linearGradient id="win" x1="0" y1="0" x2="1" y2="1"><stop offset="0" stopColor="#4cd3fb" /><stop offset="1" stopColor="#0573cf" /></linearGradient>
          </defs>
          <path d="M0 1q0-1 1-1h13v14H0zM15 0h13q1 0 1 1v13H15zM0 15h14v14H1q-1 0-1-1zM15 15h14v13q0 1-1 1H15z" fill="url(#win)" />
        </svg>
      </button>
      <label className="flex h-[38px] w-[273px] shrink-0 items-center rounded-full border border-[#e0d0d0] bg-[#fbf6f6] pr-[6px] pl-3 shadow-xs">
        <svg className="h-5 w-5 shrink-0" viewBox="0 0 20 20" fill="none" stroke="#222" strokeWidth="2"><circle cx="9" cy="8" r="7" /><path d="M14 13l5 6" strokeLinecap="round" /></svg>
        <input type="text" aria-label="検索" placeholder="検索" className="ml-3 w-0 flex-1 bg-transparent text-[16px] outline-none placeholder:text-[#555]" />
        <svg className="h-8 w-[60px]" viewBox="0 0 60 32">
          <path d="M2 16C2 8 6 2 13 4c3-4 12-3 13 2-4 7-10 12-17 16-4 2-7-1-7-6z" fill="#e9b871" />
          <path d="M6 10c5 0 9-3 11-7l4-1c-2 7-7 12-14 14z" fill="#f5d9a6" />
          <path d="M3 17c6 1 12-1 17-8M6 19l10 5 9-3M17 22l-3 8M18 22l8 7" stroke="#e0557a" strokeWidth="3" fill="none" />
          <path d="M30 22q14 10 28 0-2 7-14 7t-14-7z" fill="#8b74b5" />
          <path d="M36 4q9-4 18 0l-1 20q-8 4-16 0z" fill="#5c4a86" />
          <path d="M36.500 17q8 4 17 0v5q-8 4-16.500 0z" fill="#322650" />
          <path d="M39 5h4v12h-3z" fill="#7c69a8" />
        </svg>
      </label>
      <div className="ml-[3px] flex">
        <TaskItem label="Task view">
          <svg className="h-[28px] w-[30px]" viewBox="0 0 30 28"><rect x="8" y="0" width="22" height="20" rx="1" fill="#fbfafa" /><rect x="0" y="7" width="22" height="21" rx="1" fill="#2b2b2b" /><rect x="8" y="7" width="14" height="13" fill="#b9b6b6" /></svg>
        </TaskItem>
        <TaskItem label="Teams">
          <svg className="h-[28px] w-[30px]" viewBox="0 0 30 28">
            <circle cx="25" cy="6" r="3" fill="#5b62d6" /><circle cx="16" cy="5" r="4.5" fill="#7b83eb" />
            <path d="M20 10h9v9q0 5-6 5z" fill="#5b62d6" /><path d="M9 10h14v10q0 8-7 8t-7-7z" fill="#7b83eb" />
            <rect x="0" y="7" width="15" height="15" rx="1.5" fill="#4549b3" /><path d="M4 11h7M7.500 11v8" stroke="#fff" strokeWidth="2" />
          </svg>
        </TaskItem>
        <TaskItem label="Notepad" running>
          <svg className="h-[30px] w-[23px]" viewBox="0 0 23 30">
            <rect x="0" y="2" width="23" height="25" rx="1.5" fill="#4fc3e0" /><rect x="0" y="27" width="23" height="3" fill="#8a4a1c" />
            <path d="M3 0v4M8 0v4M13 0v4M18 0v4M5 10h12M5 15h12M5 20h12" stroke="#146a86" strokeWidth="2" />
          </svg>
        </TaskItem>
        <TaskItem label="Store">
          <svg className="h-[30px] w-[30px]" viewBox="0 0 30 30">
            <path d="M9 7V2h12v5" fill="none" stroke="#35b6f2" strokeWidth="2" /><rect x="0" y="5" width="30" height="25" rx="4" fill="#12467f" />
            <path d="M9 11h6v6H9z" fill="#f25022" /><path d="M16 11h5v6h-5z" fill="#7fba00" /><path d="M9 18h6v5H9z" fill="#00a4ef" /><path d="M16 18h5v5h-5z" fill="#ffb900" />
          </svg>
        </TaskItem>
        <TaskItem label="Explorer">
          <svg className="h-[28px] w-[30px]" viewBox="0 0 30 28">
            <path d="M0 3q0-3 3-3h7l3 4h14v8H0z" fill="#e0a010" /><rect x="0" y="4.5" width="30" height="23" rx="2" fill="#ffd04a" />
            <path d="M5 27.500v-5q0-3 3-3h14q3 0 3 3v5z" fill="#1173c6" /><path d="M9 23.500h12" stroke="#0a4d8c" strokeWidth="1.5" />
          </svg>
        </TaskItem>
        <TaskItem label="Chrome" running>
          <svg className="h-[30px] w-[30px]" viewBox="0 0 30 30">
            <circle cx="15" cy="15" r="15" fill="#fbc116" />
            <path d="M2 7.500A15 15 0 0 1 28 7.500H15L9 18.500z" fill="#e33b2e" />
            <path d="M2 7.500L8.500 19Q12 23 20 19.500L15 30A15 15 0 0 1 2 7.500z" fill="#229342" />
            <circle cx="15" cy="15" r="7.5" fill="#fff" /><circle cx="15" cy="15" r="5.8" fill="#1a73e8" />
          </svg>
        </TaskItem>
        <TaskItem label="Titan FX" running active><TitanLogo className="h-7 w-[29px]" /></TaskItem>
      </div>
      <div className="ml-auto flex items-center pr-[26px] text-[#1f1f1f]">
        <svg className="h-2 w-[14px]" viewBox="0 0 14 8" fill="none" stroke="currentColor" strokeWidth="2"><path d="M1 7l6-6 6 6" /></svg>
        <span className="ml-[26px] w-[14px] text-center text-[20px] leading-6">A</span>
        <svg className="ml-[23px] h-4 w-5" viewBox="0 0 20 16" fill="none" stroke="currentColor" strokeWidth="1.5">
          <path d="M1 6q9-9 18 0M4 9q6-6 12 0M6.500 12q3.500-4 7 0" /><circle cx="10" cy="14" r="1.5" fill="currentColor" />
        </svg>
        <svg className="ml-[10px] h-4 w-5" viewBox="0 0 20 16" fill="none" stroke="currentColor" strokeWidth="1.3"><path d="M1 5h3l4-4v14l-4-4H1zM12 5l6 6M18 5l-6 6" /></svg>
        <svg className="ml-[10px] h-[18px] w-[21px]" viewBox="0 0 21 18"><rect x="1.5" y="5.5" width="16" height="11" rx="3" fill="none" stroke="currentColor" strokeWidth="1.5" /><rect x="4" y="8" width="11" height="6" rx="1" fill="currentColor" /><path d="M18 9h2v4h-2z" fill="currentColor" /><path d="M5 0L0 7h3l-1 4 5-6H4z" fill="currentColor" stroke="#f3e0e4" strokeWidth="0.5" /></svg>
        <span className="ml-[20px] flex flex-col text-right text-[14px] leading-5"><span>18:16</span><span>2024/09/13</span></span>
        <svg className="ml-[11px] h-[19px] w-4" viewBox="0 0 16 19" fill="#334552"><path d="M8 0q6 0 6 7v5l2 3H0l2-3V7q0-7 6-7zM5 16h6q-1 3-3 3t-3-3z" /></svg>
        <span className="relative ml-[23px] h-[29px] w-[29px]">
          <svg className="h-[26px] w-[29px]" viewBox="0 0 29 26">
            <path d="M7 1h10q4 0 5 4l1 3h-6q-3 0-4 4l-2 7H5q-6 0-4-7l2-7q1-4 4-4z" fill="#27a5dc" />
            <path d="M1 12q0 7 5 7h4l2-8-8-4z" fill="#6cbf4b" /><path d="M12 0h5q4 0 5 4l1 4h-6q-3 0-4 2z" fill="#1a49c0" />
            <path d="M17 8h7q6 0 4 7l-2 6q-1 4-5 4h-8l2-11q1-6 2-6z" fill="#c24fd8" /><path d="M14 15l13 3-2 4q-1 3-5 3h-8z" fill="#f0775a" />
          </svg>
          <span className="absolute right-0 bottom-0 rounded-sm bg-[#ffc400] px-[2px] text-[9px] leading-[9px] font-bold text-black">PRE</span>
        </span>
      </div>
    </div>
  );
}

export default function App() {
  return (
    <div className="relative flex min-h-screen flex-col overflow-hidden bg-[#b0b0b0] font-['Noto_Sans','Noto_Sans_CJK_JP',sans-serif] text-black">
      <div className="flex-1 bg-linear-to-r from-[#e4e5e7] via-[#adadad] via-3% to-[#a6a6a6] pt-px pr-[6px] pb-[10px] pl-[13px]">
        <main className="overflow-hidden rounded-[10px] border border-[#9a9a9a] bg-[#f0f0f0] shadow-[0_0_10px_rgba(0,0,0,0.3)]">
          <header className="flex h-[37px] items-center bg-[#f2f4f6] pl-[9px]">
            <TitanLogo className="h-[19px] w-5" />
            <h1 className="ml-[6px] text-[14px]">20682152: TitanFX-Demo01 - デモ口座 - Titan FX Limited - USDJPY,M1</h1>
            <div className="ml-auto flex">
              <button type="button" aria-label="Minimize" className="flex w-[58px] justify-center"><svg className="h-3 w-3" viewBox="0 0 12 12"><path d="M0 6.500h12" stroke="#000" /></svg></button>
              <button type="button" aria-label="Maximize" className="flex w-[58px] justify-center"><svg className="h-3 w-3" viewBox="0 0 12 12"><rect x="0.5" y="0.5" width="11" height="11" rx="1" fill="none" stroke="#000" /></svg></button>
              <button type="button" aria-label="Close" className="flex w-[58px] justify-center"><svg className="h-3 w-3" viewBox="0 0 12 12"><path d="M0 0l12 12M12 0L0 12" stroke="#000" /></svg></button>
            </div>
          </header>
          <nav className="flex h-[26px] items-center pl-2 text-[12px]">
            <button type="button">ファイル (F)</button>
          </nav>
          <Toolbars />
          <div className="border-t-2 border-[#6a6a6a] bg-[#9a9a9a]">
            <div className="grid grid-cols-[639fr_641fr_619fr]">
              <MdiWindow chart={M15} pad="pl-[10px]" end="pr-[9px]" />
              <MdiWindow chart={H1} pad="pl-2" end="-mr-[3px]" />
              <MdiWindow chart={H4} pad="pl-2" end="-mr-2" />
            </div>
            <div className="grid h-[461px] grid-cols-[645fr_643fr_611fr] overflow-hidden">
              <MdiWindow chart={M5} pad="pl-[10px]" end="pr-[7px]" />
              <MdiWindow chart={M1} active pad="pl-2" end="pr-[11px]" />
              <MdiWindow chart={DAILY} pad="pl-1" end="-mr-2" />
            </div>
          </div>
          <div className="flex h-[26px] items-start border-t border-black pl-[6px] text-[14px] leading-5 text-[#777]">
            {TABS.map((tab) => (
              <button
                key={tab}
                type="button"
                className={
                  tab === "USDJPY,M1"
                    ? "h-6 border border-t-0 border-black bg-white px-[14px] text-black"
                    : tab === "USDJPY,M5"
                      ? "h-6 px-[14px]"
                      : "h-6 border-r border-[#777] px-[14px]"
                }
              >
                {tab}
              </button>
            ))}
            <span className="mt-[7px] ml-auto flex gap-[20px] pr-3">
              <svg className="h-2 w-1" viewBox="0 0 4 8"><path d="M4 0v8L0 4z" fill="#999" /></svg>
              <svg className="h-2 w-1" viewBox="0 0 4 8"><path d="M0 0v8l4-4z" fill="#999" /></svg>
            </span>
          </div>
          <StatusBar />
        </main>
      </div>
      <Taskbar />

      <Callout text={"セットアップ\n15m4050\n5m100g2のロングで見れる"} className="top-[38px] left-[88px] h-[117px] w-[518px]" tail="left-[335px]" drop="h-[21px] w-[54px]" />
      <Callout text={"1Hダウ的には下目線だが\n\n20を超えてるので上目線で見ている\n\nその場合、D空間あり\n4H40が邪魔"} className="top-[38px] left-[781px] h-[127px] w-[438px]" tail="left-[284px]" drop="h-[21px] w-[46px]" />
      <Callout text={"D4H　下目線だがDのWボトムは気になる\n\n4H40が上から降りてきてる"} className="top-[43px] left-[1378px] h-[116px] w-[455px]" tail="left-[294px]" drop="h-[21px] w-[46px]" />
      <Callout text={"タイミングは5m20を超えたところ\n\n1mWボトム付けてのブレイクで\nエントリー"} className="top-[538px] left-[492px] h-[163px] w-[407px]" tail="left-[262px]" drop="h-[20px] w-[44px]" />
    </div>
  );
}
